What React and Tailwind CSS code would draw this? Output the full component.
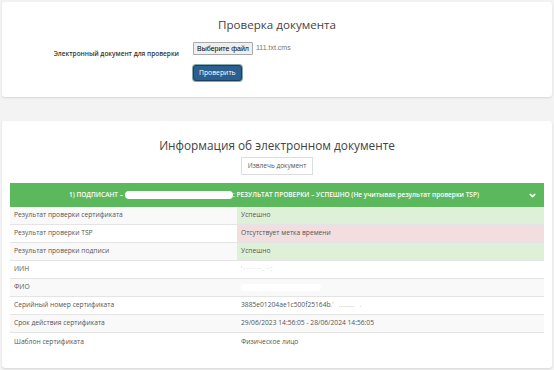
import { ChevronDown } from 'lucide-react';

const rows = [
  { label: 'Результат проверки сертификата', value: 'Успешно', tone: 'ok' },
  { label: 'Результат проверки TSP', value: 'Отсутствует метка времени', tone: 'bad' },
  { label: 'Результат проверки подписи', value: 'Успешно', tone: 'ok' },
  { label: 'ИИН', value: 'iin' },
  { label: 'ФИО', value: 'fio' },
  { label: 'Серийный номер сертификата', value: 'serial' },
  { label: 'Срок действия сертификата', value: '29/06/2023 14:56:05 - 28/06/2024 14:56:05' },
  { label: 'Шаблон сертификата', value: 'Физическое лицо' },
];

function Value({ v }) {
  if (v === 'iin') return <span className="text-[#ccc] tracking-[1px]">&#8216;·······.··:</span>;
  if (v === 'fio')
    return (
      <span className="inline-flex items-center">
        <span className="h-[7px] w-[80px] rounded-full bg-white" />
      </span>
    );
  if (v === 'serial')
    return (
      <span>
        3885e01204ae1c500f25164b<span className="text-[#bbb]">.&#8217;  &nbsp;  .........  &nbsp;  .</span>
      </span>
    );
  return <span>{v}</span>;
}

export default function App() {
  return (
    <div className="min-h-[370px] bg-[#f3f3f3] p-[2px] font-['Open_Sans',sans-serif] text-[#333]">
      <div className="h-[95px] rounded-[3px] bg-white shadow-[0_1px_2px_rgba(0,0,0,0.12)]">
        <h1 className="pt-[14px] text-center text-[11.6px] leading-[18px] text-[#444]">Проверка документа</h1>
        <div className="mt-[8px] flex">
          <div className="w-[177px] pt-[7px] text-right text-[6.5px] font-semibold leading-[10px] text-[#333]">
            Электронный документ для проверки
          </div>
          <div className="ml-[14px]">
            <div className="flex items-center gap-[3px] font-['Liberation_Sans',sans-serif] text-[7px]">
              <span className="rounded-[1px] border border-[#aaa] bg-[#efefef] px-[3px] py-[1px] leading-[9px] text-black">
                Выберите файл
              </span>
              <span className="text-[#777]">111.txt.cms</span>
            </div>
            <button className="mt-[10px] rounded-[3px] border border-[#1b3d5e] bg-[#2a5f90] px-[5px] py-[3px] text-[6.8px] leading-[8px] text-white shadow-[0_0_0_1px_#8aa]">
              Проверить
            </button>
          </div>
        </div>
      </div>

      <div className="mt-[24px] h-[247px] rounded-[3px] bg-white px-[8px] shadow-[0_1px_2px_rgba(0,0,0,0.12)]">
        <h2 className="pt-[14px] text-center text-[11.8px] leading-[20px] text-[#444]">
          Информация об электронном документе
        </h2>
        <div className="mt-[2px] flex justify-center">
          <button className="border border-[#ddd] bg-white px-[6px] py-[3px] text-[6.5px] leading-[10px] text-[#555]">
            Извлечь документ
          </button>
        </div>
        <div className="mt-[8px] flex h-[24px] items-center bg-[#5cb85c] text-[6.5px] font-semibold text-white">
          <div className="flex flex-1 items-center justify-center pl-[10px]">
            <span>1) ПОДПИСАНТ –</span>
            <span className="ml-[2px] h-[8px] w-[108px] rounded-full bg-white" />
            <span>: РЕЗУЛЬТАТ ПРОВЕРКИ – УСПЕШНО (Не учитывая результат проверки TSP)</span>
          </div>
          <ChevronDown className="mr-[7px] h-[9px] w-[9px]" strokeWidth={4} />
        </div>
        <div className="text-[6.7px] text-[#555]">
          {rows.map((r, i) => {
            const bg = i % 2 === 0 ? 'bg-[#f9f9f9]' : 'bg-white';
            const vbg = r.tone === 'ok' ? 'bg-[#dff0d8]' : r.tone === 'bad' ? 'bg-[#f2dede]' : bg;
            return (
              <div key={i} className={`flex h-[18px] items-center border-b border-[#e4e4e4] last:border-b-0 ${bg}`}>
                <div className="flex h-full w-[227px] items-center pl-[4px]">{r.label}</div>
                <div className={`flex h-full flex-1 items-center pl-[4px] ${vbg}`}>
                  <Value v={r.value} />
                </div>
              </div>
            );
          })}
        </div>
      </div>
    </div>
  );
}
